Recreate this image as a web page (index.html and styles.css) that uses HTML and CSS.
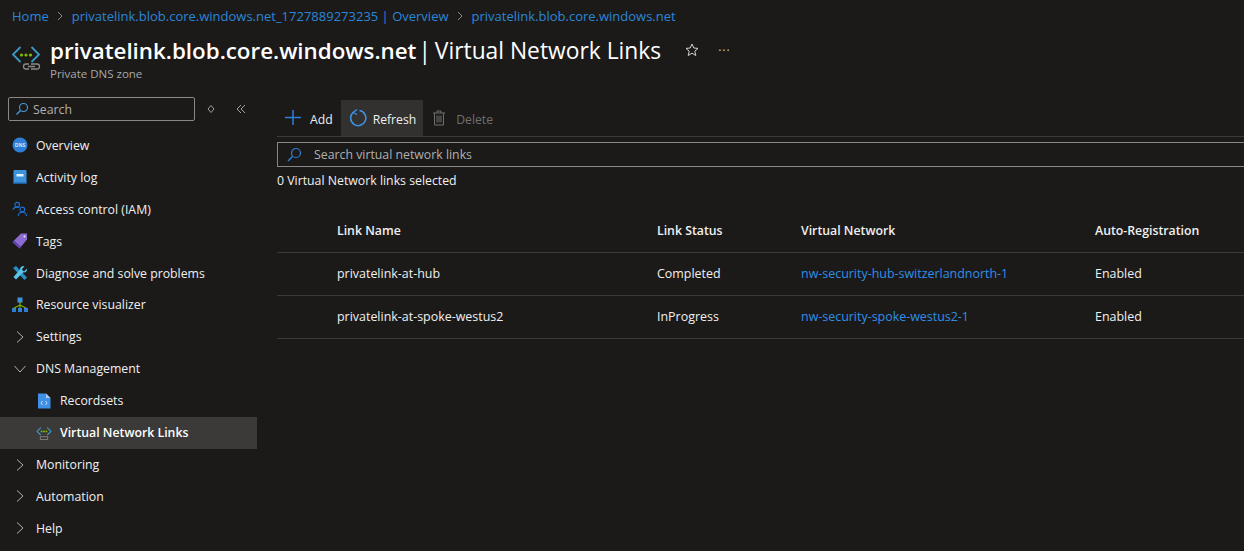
FILE: index.html
```html
<!DOCTYPE html>
<html lang="en">
<head>
    <meta charset="UTF-8">
    <meta name="viewport" content="width=device-width, initial-scale=1.0">
    <title>Virtual Network Links</title>
    <link rel="stylesheet" href="styles.css">
</head>
<body>
    <nav class="breadcrumb">
        <a>Home</a>
        <svg class="crumb-sep" width="8" height="10" viewBox="0 0 8 10"><path d="M2 1l4 4-4 4" /></svg>
        <a>privatelink.blob.core.windows.net_1727889273235 | Overview</a>
        <svg class="crumb-sep" width="8" height="10" viewBox="0 0 8 10"><path d="M2 1l4 4-4 4" /></svg>
        <a>privatelink.blob.core.windows.net</a>
    </nav>

    <header class="page-header">
        <svg class="zone-icon" width="30" height="28" viewBox="0 0 30 28">
            <path d="M9.500 3L2 10.500l7.500 7.500" fill="none" stroke="#3a9bc8" stroke-width="1.800" />
            <path d="M20.500 3L28 10.500 20.500 18" fill="none" stroke="#3a9bc8" stroke-width="1.800" />
            <circle cx="10.500" cy="11" r="1.600" fill="#7fba00" />
            <circle cx="15" cy="11" r="1.600" fill="#7fba00" />
            <circle cx="19.500" cy="11" r="1.600" fill="#7fba00" />
            <path d="M18 20h-3a2.500 2.500 0 0 0 0 5h3M20 20h6a2.500 2.500 0 0 1 0 5h-6M17 22.500h7" fill="none" stroke="#8a8a8a" stroke-width="1.300" />
        </svg>
        <div class="title-block">
            <div class="title-row">
                <h1><b>privatelink.blob.core.windows.net</b> <span class="title-sep">|</span> Virtual Network Links</h1>
                <svg class="star" width="16" height="16" viewBox="0 0 16 16"><path d="M8 2l1.800 4 4.200.400-3.200 2.800 1 4.300L8 11.200l-3.800 2.300 1-4.300L2 6.400 6.200 6z" /></svg>
                <span class="more">···</span>
            </div>
            <div class="subtitle">Private DNS zone</div>
        </div>
    </header>

    <div class="columns">
        <aside class="sidebar">
            <div class="side-search-row">
                <div class="side-search">
                    <svg width="14" height="14" viewBox="0 0 14 14"><circle cx="8.500" cy="5.500" r="4" fill="none" stroke="#4a9de0" stroke-width="1.100" /><path d="M5.500 8.500L1.500 12.500" stroke="#4a9de0" stroke-width="1.300" /></svg>
                    <span>Search</span>
                </div>
                <svg class="side-tool" width="10" height="10" viewBox="0 0 10 10"><path d="M5 1.500L8 5 5 8.500 2 5z" fill="none" stroke="#a0a0a0" /></svg>
                <svg class="side-tool collapse" width="12" height="10" viewBox="0 0 12 10"><path d="M6 1L2 5l4 4M10 1L6 5l4 4" fill="none" stroke="#a0a0a0" /></svg>
            </div>

            <ul class="menu">
                <li class="menu-item">
                    <svg width="16" height="16" viewBox="0 0 16 16"><circle cx="8" cy="8" r="7.500" fill="#2f7fd8" /><text x="8" y="10" class="dns-mark">DNS</text></svg>
                    Overview
                </li>
                <li class="menu-item">
                    <svg width="16" height="16" viewBox="0 0 16 16"><rect x="1.500" y="1" width="13" height="14" rx="1" fill="#3c93dc" /><rect x="1.500" y="13.500" width="13" height="1.500" fill="#1b5e9e" /><rect x="4.500" y="5" width="7" height="2.500" fill="#e6f1fb" /></svg>
                    Activity log
                </li>
                <li class="menu-item">
                    <svg width="16" height="16" viewBox="0 0 17 16" fill="none" stroke="#1f6fd0" stroke-width="1.200"><circle cx="5.500" cy="3.500" r="2.500" /><path d="M1 9c.5-2 2-3 4.500-3 1 0 2 .2 2.500.6" /><circle cx="11" cy="8.500" r="2.500" /><path d="M6.500 15.500c.3-2.500 2-4 4.500-4s4.200 1.500 4.500 4" /></svg>
                    Access control (IAM)
                </li>
                <li class="menu-item">
                    <svg width="16" height="16" viewBox="0 0 16 16"><path d="M9 .5h6v6L7.500 15.500.5 9z" fill="#8c6bd0" /><path d="M.5 9l7 6.500L9 14 2 7.500z" fill="#5e3fa8" /><circle cx="12.500" cy="3.500" r="1" fill="#efe9fb" /></svg>
                    Tags
                </li>
                <li class="menu-item">
                    <svg width="16" height="16" viewBox="0 0 16 16"><path d="M1 3l3-2 11 11.500-2.500 2.500z" fill="#2a8fc4" /><path d="M15 3.500L12 6.500 9.800 4.500 12.500 1C10 .5 8 2 8 4.500L1.500 12 4 14.500 11 7.500c2.500.5 4.500-1.500 4-4z" fill="#59c4ea" /></svg>
                    Diagnose and solve problems
                </li>
                <li class="menu-item">
                    <svg width="16" height="16" viewBox="0 0 16 16"><rect x="5.500" y="0.500" width="5" height="5" fill="#3c93dc" /><rect x="0" y="11" width="4" height="4" fill="#2f7fd8" /><rect x="6" y="11" width="4" height="4" fill="#2f7fd8" /><rect x="12" y="11" width="4" height="4" fill="#2f7fd8" /><path d="M8 5v6M2 11l6-3 6 3" fill="none" stroke="#7fba00" stroke-width="1.100" /></svg>
                    Resource visualizer
                </li>
                <li class="menu-item">
                    <svg class="chevron" width="10" height="14" viewBox="0 0 10 14"><path d="M2 1.500L8 7l-6 5.500" /></svg>
                    Settings
                </li>
                <li class="menu-item">
                    <svg class="chevron" width="14" height="10" viewBox="0 0 14 10"><path d="M1.500 2L7 8l5.500-6" /></svg>
                    DNS Management
                </li>
                <li class="menu-item child">
                    <svg width="16" height="16" viewBox="0 0 16 16"><path d="M2 .5h8l4.500 4.500v10.500H2z" fill="#3f8fe6" /><path d="M10 .5v4.500h4.500z" fill="#a9cdf2" /><path d="M6.500 8L5 10l1.500 2M9.500 8L11 10l-1.500 2" fill="none" stroke="#e6f1fb" stroke-width=".8" /></svg>
                    Recordsets
                </li>
                <li class="menu-item child selected">
                    <svg width="16" height="16" viewBox="0 0 30 28">
                        <path d="M9 4L2 11l7 7" fill="none" stroke="#3a9bc8" stroke-width="2" />
                        <path d="M21 4l7 7-7 7" fill="none" stroke="#3a9bc8" stroke-width="2" />
                        <circle cx="10.500" cy="11" r="1.800" fill="#7fba00" />
                        <circle cx="15" cy="11" r="1.800" fill="#7fba00" />
                        <circle cx="19.500" cy="11" r="1.800" fill="#7fba00" />
                        <rect x="8" y="21" width="14" height="5" fill="none" stroke="#8a8a8a" stroke-width="1.500" />
                    </svg>
                    Virtual Network Links
                </li>
                <li class="menu-item">
                    <svg class="chevron" width="10" height="14" viewBox="0 0 10 14"><path d="M2 1.500L8 7l-6 5.500" /></svg>
                    Monitoring
                </li>
                <li class="menu-item">
                    <svg class="chevron" width="10" height="14" viewBox="0 0 10 14"><path d="M2 1.500L8 7l-6 5.500" /></svg>
                    Automation
                </li>
                <li class="menu-item">
                    <svg class="chevron" width="10" height="14" viewBox="0 0 10 14"><path d="M2 1.500L8 7l-6 5.500" /></svg>
                    Help
                </li>
            </ul>
        </aside>

        <main class="content">
            <div class="toolbar">
                <button class="tool add">
                    <svg width="18" height="18" viewBox="0 0 18 18"><path d="M8 1v15M0 8.500h16" stroke="#2f7fd8" stroke-width="1.500" /></svg>
                    <span>Add</span>
                </button>
                <button class="tool active">
                    <svg width="18" height="18" viewBox="0 0 18 18" fill="none" stroke="#3f95e6" stroke-width="1.500"><path d="M4 3.500A7.600 7.600 0 1 0 10.500 1.500" /><path d="M8 .5L4 3.500l4 2" stroke-width="1.200" /></svg>
                    <span>Refresh</span>
                </button>
                <button class="tool disabled">
                    <svg width="14" height="16" viewBox="0 0 14 16" fill="none" stroke="#6e6e6e"><path d="M1 3h12M5 3V1h4v2M2.500 3v12h9V3M5 5.500v7M7 5.500v7M9 5.500v7" /></svg>
                    <span>Delete</span>
                </button>
            </div>

            <div class="filter">
                <svg width="16" height="16" viewBox="0 0 16 16"><circle cx="10" cy="6" r="4.500" fill="none" stroke="#2f7fd8" stroke-width="1.200" /><path d="M6.500 9.500L2 14" stroke="#2f7fd8" stroke-width="1.500" /></svg>
                <span>Search virtual network links</span>
            </div>
            <p class="selected-count">0 Virtual Network links selected</p>

            <div class="links-table">
                <div class="row head">
                    <span>Link Name</span><span>Link Status</span><span>Virtual Network</span><span>Auto-Registration</span>
                </div>
                <div class="row">
                    <span>privatelink-at-hub</span><span>Completed</span><a>nw-security-hub-switzerlandnorth-1</a><span>Enabled</span>
                </div>
                <div class="row">
                    <span>privatelink-at-spoke-westus2</span><span>InProgress</span><a>nw-security-spoke-westus2-1</a><span>Enabled</span>
                </div>
            </div>
        </main>
    </div>
</body>
</html>
```

FILE: styles.css
```css
html, body {
    height: 100%;
}
body {
    font-family: "Open Sans", "Noto Sans", sans-serif;
    font-size: 12.3px;
    margin: 0;
    background-color: #1b1a19;
    color: #f0f0f0;
    overflow: hidden;
}
a {
    color: #2f8fe8;
}
.breadcrumb {
    display: flex;
    align-items: center;
    gap: 7.5px;
    height: 17px;
    padding: 7px 0 0 12px;
    font-size: 13px;
}
.breadcrumb a {
    color: #2b86d8;
}
.crumb-sep path {
    fill: none;
    stroke: #8a8a8a;
}
.page-header {
    display: flex;
    gap: 9px;
    height: 55px;
    padding: 11px 0 0 11px;
}
.zone-icon {
    margin-top: 9px;
}
.title-row {
    display: flex;
    align-items: center;
    height: 30px;
}
h1 {
    margin: 0;
    font-size: 22.8px;
    font-weight: 400;
    color: #fff;
    white-space: nowrap;
}
h1 b {
    font-size: 22.35px;
    font-weight: 600;
}
.title-sep {
    margin: 0 -2px 0 -4px;
}
.star {
    margin-left: 23px;
}
.star path {
    fill: none;
    stroke: #d0d0d0;
}
.more {
    margin-left: 18px;
    color: #c8c8c8;
    letter-spacing: 1px;
}
.subtitle {
    margin-top: 1px;
    font-size: 11.5px;
    color: #a8a8a8;
}
.columns {
    display: flex;
}
.sidebar {
    width: 257px;
    flex: none;
}
.side-search-row {
    display: flex;
    align-items: center;
    padding: 7px 0 0 8px;
}
.side-search {
    display: flex;
    align-items: center;
    gap: 4px;
    box-sizing: border-box;
    width: 187px;
    height: 24px;
    padding-left: 6px;
    border: 1px solid #8a8886;
    border-radius: 2px;
    color: #b0b0b0;
}
.side-tool {
    margin-left: 11px;
}
.side-tool.collapse {
    margin-left: 19px;
}
.menu {
    list-style: none;
    margin: 8.5px 0 0;
    padding: 0;
}
.menu-item {
    display: flex;
    align-items: center;
    gap: 8px;
    height: 31.92px;
    padding-left: 12px;
    white-space: nowrap;
}
.menu-item.child {
    padding-left: 36px;
}
.menu-item.selected {
    background-color: #3b3a39;
    font-weight: 600;
    color: #fff;
}
.dns-mark {
    font-size: 5px;
    font-weight: 700;
    text-anchor: middle;
    fill: #cfe3f8;
}
.chevron {
    width: 16px;
    flex: none;
}
.chevron path {
    fill: none;
    stroke: #b0b0b0;
    stroke-width: 1;
}
.content {
    flex: 1;
    min-width: 0;
    padding: 0 0 0 20px;
    margin-top: 10px;
}
.toolbar {
    display: flex;
    height: 36px;
    border-bottom: 1px solid #3b3a39;
}
.tool {
    display: flex;
    align-items: center;
    gap: 6px;
    padding: 0 8px;
    border: none;
    background: none;
    color: #f0f0f0;
    font: inherit;
    font-size: 12.2px;
}
.tool span {
    padding-top: 2px;
}
.tool.add {
    gap: 7px;
}
.tool.active {
    padding-right: 7px;
    background-color: #323130;
}
.tool.disabled {
    gap: 10px;
    padding-left: 9px;
    color: #6e6e6e;
}
.filter {
    display: flex;
    align-items: center;
    gap: 12px;
    box-sizing: border-box;
    height: 25px;
    margin-top: 5px;
    margin-right: -4px;
    padding-left: 8px;
    border: 1px solid #8a8886;
    color: #b0b0b0;
}
.selected-count {
    margin: 5px 0 0;
    height: 18px;
}
.links-table {
    margin-top: 19px;
}
.row {
    display: grid;
    grid-template-columns: 320px 144px 294px 1fr;
    align-items: center;
    height: 40px;
    padding-left: 60px;
    padding-bottom: 2px;
    border-bottom: 1px solid #3b3a39;
    font-size: 12.45px;
    white-space: nowrap;
}
.row.head {
    height: 43px;
    padding-bottom: 0;
    font-size: 12.3px;
    font-weight: 600;
}
```
